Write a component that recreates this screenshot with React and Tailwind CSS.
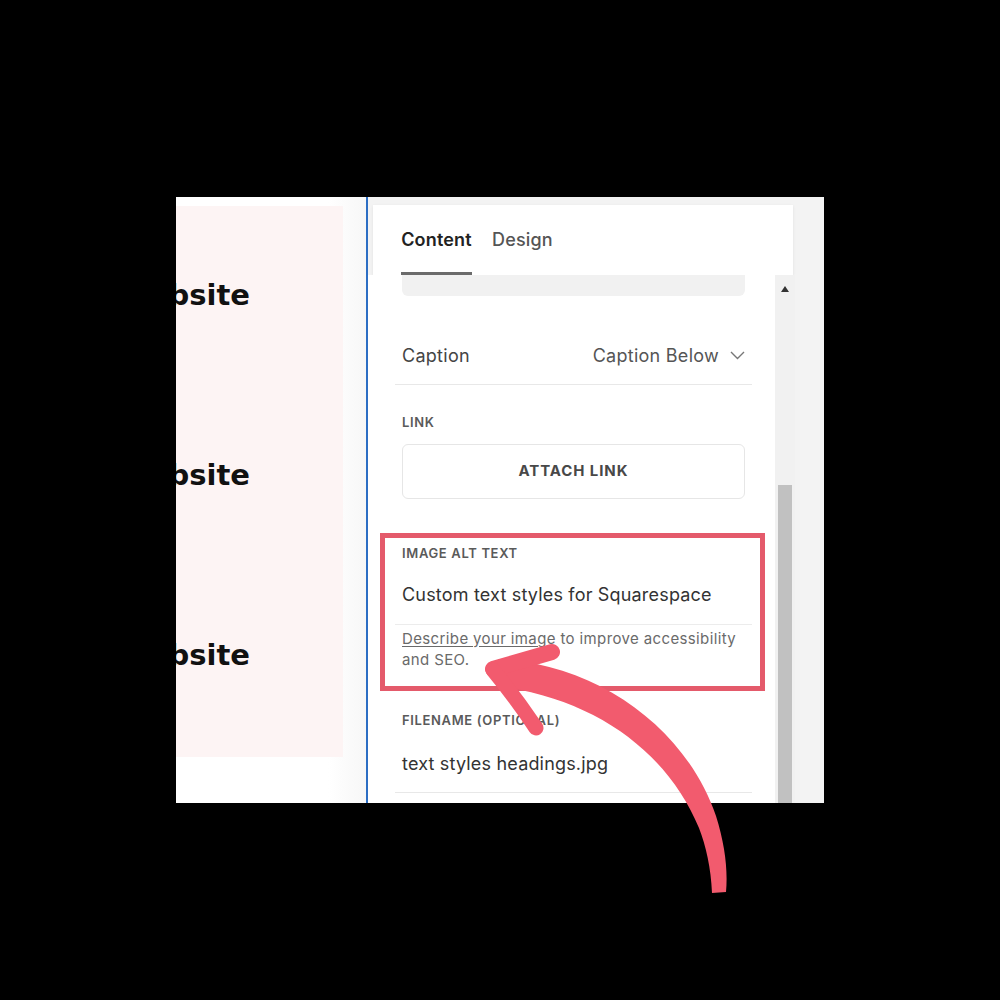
import React from 'react';

const Divider = () => <div className="-mx-[7px] h-px bg-[#e8e8e8]" />;

const Label = ({ children, className = '' }) => (
  <div className={`h-4 text-[13px] leading-4 font-semibold tracking-[0.05em] uppercase text-[#5a5a5a] ${className}`}>
    {children}
  </div>
);

const PreviewHeading = () => (
  <div className="h-[180px] flex items-center">
    <div className="w-[74px] flex justify-end overflow-hidden">
      <span className="whitespace-nowrap text-[29px] font-bold text-[#111] font-['DejaVu_Sans',sans-serif]">website</span>
    </div>
  </div>
);

const Arrow = () => (
  <svg className="absolute left-0 top-0 pointer-events-none" width="1000" height="1000" viewBox="0 0 1000 1000">
    <g fill="#f25b6e" stroke="#f25b6e" strokeLinecap="round" strokeLinejoin="round">
      <path
        stroke="none"
        d="M 498 659 C 598 664 686 728 716 816 C 725 845 728 870 726 892 L 712 893 C 711 868 706 846 699 828 C 668 754 600 702 505 687 Z"
      />
      <path fill="none" strokeWidth="16" d="M 493 669 L 552 652" />
      <path fill="none" strokeWidth="15" d="M 493 670 Q 516 698 536 728" />
    </g>
  </svg>
);

export default function App() {
  return (
    <div className="relative w-[1000px] h-[1000px] bg-black pt-[197px] pl-[176px] font-['Inter',sans-serif]">
      <div className="flex w-[648px] h-[606px] bg-white overflow-hidden">
        {/* page preview */}
        <div className="w-[190px] flex flex-col pt-[9px] bg-gradient-to-r from-white from-80% to-[#f7f7f7]">
          <div className="w-[167px] h-[551px] bg-[#fdf4f4]">
            <PreviewHeading />
            <PreviewHeading />
            <PreviewHeading />
          </div>
        </div>
        <div className="w-[2px] bg-[#2c6ec4]" />

        {/* editor panel */}
        <div className="w-[456px] flex flex-col bg-[#f3f3f3]">
          <div className="h-[8px]" />
          <div className="ml-[5px] w-[420px] h-[70px] bg-white shadow-[0_1px_3px_rgba(0,0,0,0.08)] flex items-end pl-[28px] gap-[20px]">
            <div className="flex flex-col items-center">
              <span className="text-[18px] font-semibold tracking-[0.01em] text-[#222]">Content</span>
              <div className="mt-[19px] w-[71px] h-[3px] bg-[#6b6b6b]" />
            </div>
            <div className="flex flex-col">
              <span className="text-[18px] font-medium tracking-[0.01em] text-[#555]">Design</span>
              <div className="mt-[19px] h-[3px]" />
            </div>
          </div>

          <div className="flex flex-1">
            <div className="w-[407px] bg-white pl-[34px] pr-[30px] flex flex-col">
              <div className="h-[21px] bg-[#f1f1f1] rounded-b-md" />

              <div className="mt-[30px] h-[58px] flex items-center justify-between text-[18px] tracking-[0.015em]">
                <span className="text-[#444]">Caption</span>
                <span className="flex items-center gap-[11px] text-[#555]">
                  Caption Below
                  <svg width="15" height="9" viewBox="0 0 15 9" fill="none" stroke="#777" strokeWidth="1.4">
                    <path d="M1 1 L7.5 7.5 L14 1" />
                  </svg>
                </span>
              </div>
              <Divider />

              <Label className="mt-[29px]">Link</Label>
              <div className="mt-[14px] h-[55px] border border-[#e6e6e6] rounded-md flex items-center justify-center text-[15px] font-bold tracking-[0.06em] text-[#484848]">
                ATTACH LINK
              </div>

              <div className="mt-[34px] -ml-[22px] w-[385px] h-[158px] border-[5px] border-[#e45a6b] pl-[17px] pr-[8px] pt-[7px] flex flex-col">
                <Label>Image Alt Text</Label>
                <div className="mt-[22px] h-6 leading-6 text-[18px] tracking-[0.01em] text-[#333]">Custom text styles for Squarespace</div>
                <div className="mt-[17px] -ml-[7px] w-[357px] h-px bg-[#ececec]" />
                <p className="mt-[3px] text-[15px] tracking-[0.025em] leading-[21px] text-[#6a6a6a]">
                  <span className="underline underline-offset-2">Describe your image</span> to improve accessibility and SEO.
                </p>
              </div>

              <Label className="mt-[21px]">Filename (Optional)</Label>
              <div className="mt-[24px] h-6 leading-6 text-[18px] tracking-[0.01em] text-[#333]">text styles headings.jpg</div>
              <div className="mt-[16px]">
                <Divider />
              </div>
            </div>

            <div className="w-[20px] bg-[#f1f1f1] flex flex-col items-center">
              <div className="mt-[11px] w-0 h-0 border-l-[4px] border-r-[4px] border-b-[6px] border-l-transparent border-r-transparent border-b-[#333]" />
              <div className="mt-[193px] w-[14px] flex-1 bg-[#c1c1c1]" />
            </div>
            <div className="flex-1 bg-[#f3f3f3]" />
          </div>
        </div>
      </div>
      <Arrow />
    </div>
  );
}
